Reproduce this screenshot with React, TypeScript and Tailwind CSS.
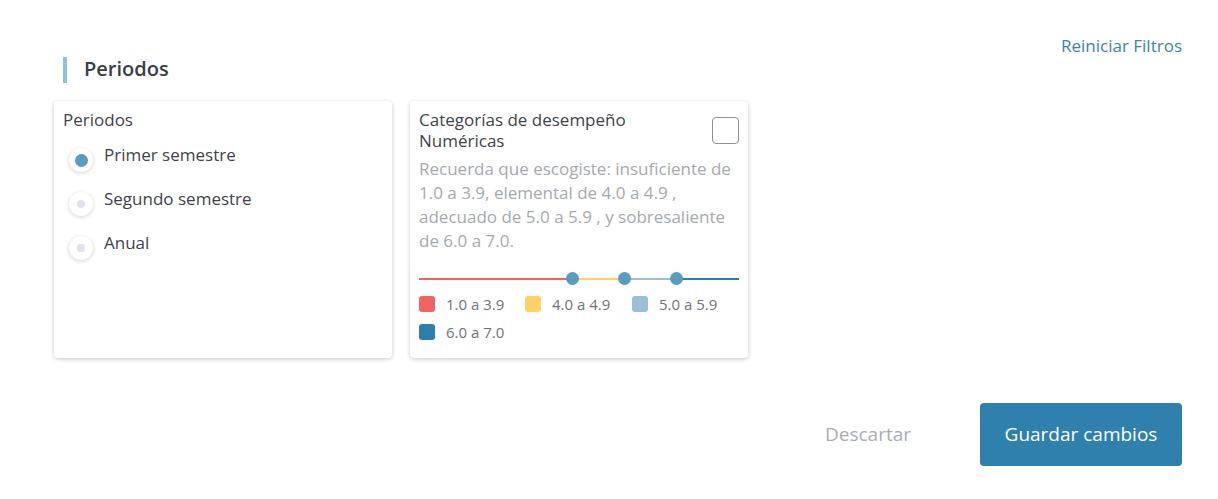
import React from "react";

const font = { fontFamily: "'Open Sans', Lato, sans-serif" };

function Radio({ label, checked }: { label: string; checked?: boolean }) {
  return (
    <div className="flex items-start h-[44px]">
      <div className="w-[24px] h-[24px] mt-[1px] ml-[6px] rounded-full bg-white shadow-[0_1px_4px_rgba(0,0,0,0.18)] flex items-center justify-center">
        {checked ? (
          <div className="w-[13px] h-[13px] rounded-full bg-[#5a9bc0]" />
        ) : (
          <div className="w-[8px] h-[8px] rounded-full bg-[#dfe2ea]" />
        )}
      </div>
      <span className="ml-[11px] text-[17px] leading-[20px] text-[#3f434c] -mt-[2px]">{label}</span>
    </div>
  );
}

function Legend({ color, label }: { color: string; label: string }) {
  return (
    <div className="flex items-center h-[16px]">
      <div className={`w-[16px] h-[16px] rounded-[3px] ${color}`} />
      <span className="ml-[11px] text-[15px] text-[#6f737b]">{label}</span>
    </div>
  );
}

export default function App() {
  return (
    <div className="w-[1218px] h-[499px] bg-white relative" style={font}>
      <div className="pl-[54px] pr-[36px] pt-[36px]">
        <div className="flex justify-between items-start">
          <div className="flex items-center mt-[21px] ml-[9px]">
            <div className="w-[4px] h-[26px] bg-[#94c0d7]" />
            <span className="ml-[17px] text-[20px] font-semibold text-[#3a3e47] leading-[26px] -mt-[3px]">Periodos</span>
          </div>
          <button className="text-[17px] text-[#3b84b1] leading-[20px]">Reiniciar Filtros</button>
        </div>

        <div className="flex gap-[18px] mt-[18px]">
          <div className="w-[338px] h-[257px] bg-white rounded-[4px] shadow-[0_1px_4px_rgba(0,0,0,0.22)] pt-[9px] px-[9px]">
            <div className="text-[17px] leading-[20px] text-[#3f434c]">Periodos</div>
            <div className="mt-[17px]">
              <Radio label="Primer semestre" checked />
              <Radio label="Segundo semestre" />
              <Radio label="Anual" />
            </div>
          </div>

          <div className="w-[338px] h-[257px] bg-white rounded-[4px] shadow-[0_1px_4px_rgba(0,0,0,0.22)] pt-[9px] px-[9px]">
            <div className="flex justify-between items-start">
              <div className="text-[17px] leading-[21px] text-[#3f434c] -mt-[1px]">
                Categorías de desempeño
                <br />
                Numéricas
              </div>
              <div className="w-[27px] h-[27px] mt-[7px] rounded-[4px] border border-[#8d9199] bg-white" />
            </div>
            <p className="mt-[6px] text-[17px] leading-[24px] text-[#a6a9b0]">
              Recuerda que escogiste: insuficiente de 1.0 a 3.9, elemental de 4.0 a 4.9 , adecuado de 5.0 a 5.9 , y sobresaliente de 6.0 a 7.0.
            </p>
            <div className="relative h-[14px] mt-[19px]">
              <div className="absolute left-0 right-0 top-[6px] h-[2px] flex">
                <div className="w-[153px] bg-[#ee6460]" />
                <div className="w-[52px] bg-[#fed165]" />
                <div className="w-[52px] bg-[#98c0d8]" />
                <div className="flex-1 bg-[#2f7fac]" />
              </div>
              <div className="absolute top-0 left-[147px] w-[13px] h-[13px] rounded-full bg-[#5a9bc0]" />
              <div className="absolute top-0 left-[199px] w-[13px] h-[13px] rounded-full bg-[#5a9bc0]" />
              <div className="absolute top-0 left-[251px] w-[13px] h-[13px] rounded-full bg-[#5a9bc0]" />
            </div>
            <div className="mt-[10px] flex flex-wrap gap-y-[12px]">
              <div className="w-[106px]"><Legend color="bg-[#ef6461]" label="1.0 a 3.9" /></div>
              <div className="w-[107px]"><Legend color="bg-[#ffd166]" label="4.0 a 4.9" /></div>
              <div className="w-[106px]"><Legend color="bg-[#98c1d9]" label="5.0 a 5.9" /></div>
              <div className="w-[106px]"><Legend color="bg-[#2e7fab]" label="6.0 a 7.0" /></div>
            </div>
          </div>
        </div>

        <div className="flex justify-end items-center mt-[45px]">
          <button className="text-[19px] text-[#aaadb4] mr-[69px]">Descartar</button>
          <button className="w-[202px] h-[63px] rounded-[4px] bg-[#2f80ad] text-white text-[19px]">Guardar cambios</button>
        </div>
      </div>
    </div>
  );
}
